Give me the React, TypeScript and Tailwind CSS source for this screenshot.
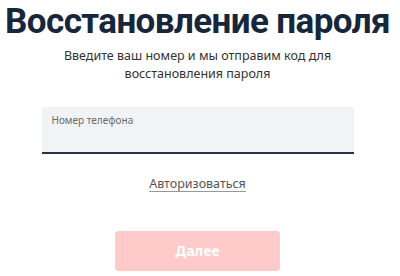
import React from 'react';

const App: React.FC = () => {
    return (
        <div className="w-[400px] h-[276px] bg-white flex flex-col items-center overflow-hidden pr-[5px]" style={{ fontFamily: '"Noto Sans", "Open Sans", sans-serif' }}>
            <h1 className="mt-[0px] text-[35px] leading-[44px] font-bold text-[#17263a] whitespace-nowrap tracking-[-0.6px]" style={{ fontFamily: 'Roboto, "Noto Sans", sans-serif' }}>Восстановление пароля</h1>
            <p className="mt-[3px] w-[280px] text-center text-[12.5px] leading-[18px] text-[#333]">
                Введите ваш номер и мы отправим код для восстановления пароля
            </p>
            <div className="mt-[24px] w-[312px] h-[47px] bg-[#f2f3f5] border-b-2 border-[#2a3440] rounded-t-[3px] px-[10px] pt-[6px]">
                <span className="block text-[10px] leading-[14px] text-[#6b6b6b]">Номер телефона</span>
            </div>
            <a href="#" className="mt-[21px] text-[12.5px] text-[#555] underline underline-offset-[3px] decoration-[#999]">Авторизоваться</a>
            <button className="mt-[37px] w-[165px] h-[40px] rounded-[4px] bg-[#fecaca] text-white text-[14px] font-bold">Далее</button>
        </div>
    );
};

export default App;
